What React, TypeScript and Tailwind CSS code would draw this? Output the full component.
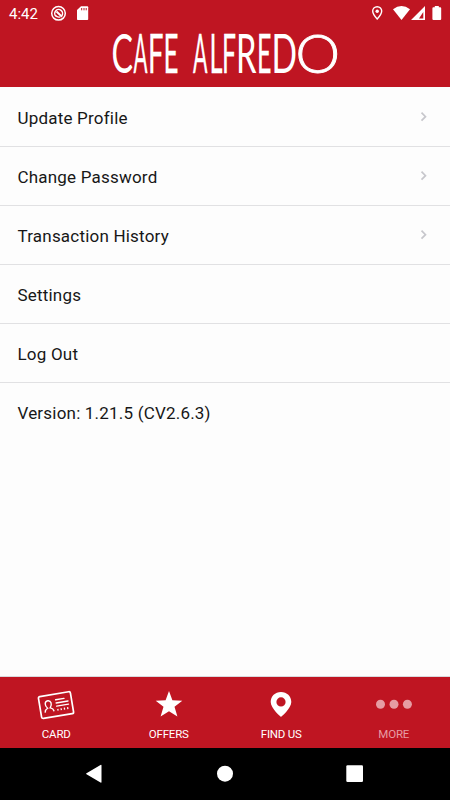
import React from 'react';

interface MenuItem {
  label: string;
  arrow?: boolean;
}

const menu: MenuItem[] = [
  { label: 'Update Profile', arrow: true },
  { label: 'Change Password', arrow: true },
  { label: 'Transaction History', arrow: true },
  { label: 'Settings' },
  { label: 'Log Out' },
  { label: 'Version: 1.21.5 (CV2.6.3)' },
];

// x and advance width of every letter in the wordmark
const wordmark = [
  { char: 'C', x: 111.5, width: 21.5, weight: 400, stroke: 0 },
  { char: 'A', x: 133.5, width: 14, weight: 400, stroke: 0.3 },
  { char: 'F', x: 148, width: 15.5, weight: 400, stroke: 0.3 },
  { char: 'E', x: 163.5, width: 15, weight: 400, stroke: 0.3 },
  { char: ' ', x: 179, width: 13, weight: 400, stroke: 0 },
  { char: 'A', x: 193, width: 14.5, weight: 400, stroke: 0.3 },
  { char: 'L', x: 209.5, width: 13, weight: 400, stroke: 0.3 },
  { char: 'F', x: 222, width: 14, weight: 400, stroke: 0.3 },
  { char: 'R', x: 236, width: 20.5, weight: 400, stroke: 0 },
  { char: 'E', x: 257, width: 14.5, weight: 400, stroke: 0.3 },
  { char: 'D', x: 271.5, width: 25.5, weight: 400, stroke: 0 },
  { char: 'O', x: 295.5, width: 44.5, weight: 300, stroke: 0.9 },
];

const StatusBar: React.FC = () => (
  <div className="flex h-7 items-center text-white">
    <span className="w-[41px] pl-[9px] text-[15px] leading-7 whitespace-nowrap">4:42</span>
    <svg className="ml-[9px]" width="17" height="28" viewBox="0 0 17 28" fill="none" stroke="#fff">
      <circle cx="8.5" cy="13.3" r="6.8" strokeWidth="1.5" />
      <path d="M6 16.300a3.900 3.900 0 1 1 5.800-.600" strokeWidth="1.500" />
      <path d="M6.500 11.500l5.500 5.200" strokeWidth="2" />
      <path d="M5.500 15.500q2 2.200 4.800 1.300" strokeWidth="1.300" />
    </svg>
    <svg className="ml-[10px]" width="12" height="28" viewBox="0 0 12 28">
      <path d="M4 6.3h6.3q.9 0 .9.9v12q0 .8-.8.8H.8Q0 20 0 19.200V10z" fill="#fff" />
      <path d="M4.7 8v2.300M7 8v2.300M9.200 8v2.300" stroke="#bf1522" strokeWidth="1" />
    </svg>
    <svg className="ml-auto" width="80" height="28" viewBox="370 0 80 28" fill="#fff">
      <path d="M377.200 6.700c-2.700 0-4.500 2-4.500 4.400 0 3.200 4.500 8 4.500 8s4.500-4.800 4.500-8c0-2.400-1.800-4.400-4.500-4.400z" fill="none" stroke="#fff" strokeWidth="1.4" />
      <circle cx="377.200" cy="11.200" r="1.700" />
      <path d="M393 9.200q8.500-6.200 17 0L401.500 20z" />
      <path fillRule="evenodd" d="M425 6v14h-14zM423.300 12l-4.300 6.500h4.300z" />
      <path d="M434.800 6h4v1.300h1.400q1 0 1 1V19q0 1-1 1h-6.800q-1 0-1-1V8.300q0-1 1-1h1.400z" />
    </svg>
  </div>
);

const Wordmark: React.FC = () => (
  <svg width="450" height="59" viewBox="0 28 450 59" fill="#fff" stroke="#fff" fontFamily="Lato, sans-serif" fontSize="53.500">
    {wordmark.map((l, i) => (
      <text key={i} x={l.x} y="73" textLength={l.width} lengthAdjust="spacingAndGlyphs" fontWeight={l.weight} strokeWidth={l.stroke}>
        {l.char}
      </text>
    ))}
  </svg>
);

const CardIcon = () => (
  <svg width="38" height="32" viewBox="0 0 38 32" fill="none" stroke="#fff" strokeLinecap="round">
    <g transform="rotate(-9.500 19 16)">
      <rect x="2.800" y="5" width="32.400" height="22.200" rx="1.600" strokeWidth="1.700" />
      <path d="M7.200 21.300c.2-2.400 1.500-2.900 3-3.500-2.800-2.900-2-7.300 1.300-7.300s4.100 4.400 1.300 7.300c1.500.6 3 1.100 3.200 3.500" strokeWidth="1.400" />
      <path d="M19.500 10.800h8.500M19.500 14h12M19.500 17.200h12" strokeWidth="1.400" />
      <path d="M19.500 21h1.300M22.800 21h1.300M26.100 21h1.300M29.400 21h1.300" strokeWidth="1.900" strokeLinecap="butt" />
    </g>
  </svg>
);

const StarIcon = () => (
  <svg width="28" height="32" viewBox="0 0 28 32" fill="#fff">
    <path d="M14 2l3.400 9.300 9.900.400-7.800 6.100 2.900 9.600L14 22.200l-8.400 5.200 2.900-9.600-7.800-6.100 9.900-.400z" />
  </svg>
);

const PinIcon = () => (
  <svg width="24" height="32" viewBox="0 0 24 32" fill="#fff">
    <path fillRule="evenodd" d="M12 3C6.100 3 1.700 7.300 1.700 13c0 6.500 10.300 15 10.300 15s10.300-8.500 10.300-15C22.300 7.300 17.900 3 12 3zm0 5.300a4.600 4.600 0 1 1 0 9.200 4.600 4.600 0 0 1 0-9.200z" />
  </svg>
);

const DotsIcon = () => (
  <svg width="38" height="32" viewBox="0 0 38 32" fill="currentColor">
    <circle cx="5.500" cy="15.300" r="4.500" />
    <circle cx="19" cy="15.300" r="4.500" />
    <circle cx="32.400" cy="15.300" r="4.500" />
  </svg>
);

const tabs = [
  { label: 'CARD', icon: CardIcon, color: 'text-white' },
  { label: 'OFFERS', icon: StarIcon, color: 'text-white' },
  { label: 'FIND US', icon: PinIcon, color: 'text-white' },
  { label: 'MORE', icon: DotsIcon, color: 'text-[#e69ca3]' },
];

const App: React.FC = () => {
  return (
    <div className="flex h-[800px] w-[450px] flex-col overflow-hidden bg-[#fdfdfd] font-['Roboto',sans-serif]">
      <header className="h-[87px] shrink-0 bg-[#bf1522]">
        <StatusBar />
        <Wordmark />
      </header>

      <main className="flex-grow pt-px">
        {menu.map((item) => (
          <div
            key={item.label}
            className="flex h-[59px] items-center justify-between border-b border-[#e1e1e3] pr-[22px] pl-[17.500px] last:border-transparent"
          >
            <span className="pt-0.5 text-[17px] leading-5 tracking-[0.2px] text-[#171717]">{item.label}</span>
            {item.arrow && (
              <svg width="8" height="12" viewBox="0 0 8 12" fill="none" stroke="#c7c7cc" strokeWidth="1.700">
                <path d="M1.500 1.700l4 4-4 4" />
              </svg>
            )}
          </div>
        ))}
      </main>

      <nav className="grid h-[72px] shrink-0 grid-cols-4 border-t border-[#d9d9dd] bg-[#bf1522]">
        {tabs.map((tab) => (
          <div key={tab.label} className={`flex flex-col items-center pt-3 ${tab.color}`}>
            <tab.icon />
            <span className="mt-[5px] text-[11.500px] leading-4 tracking-[-0.200px]">{tab.label}</span>
          </div>
        ))}
      </nav>

      <div className="h-[52px] shrink-0 bg-black">
        <svg width="450" height="52" viewBox="0 748 450 52" fill="#fff">
          <path d="M86.500 773.200l14-8.200q1-.5 1 .5v16.500q0 1-1 .5l-14-8.200q-1-.5 0-1.100z" />
          <circle cx="225" cy="773.700" r="8" />
          <rect x="346.300" y="765.300" width="16.700" height="16.700" rx="1.200" />
        </svg>
      </div>
    </div>
  );
};

export default App;
